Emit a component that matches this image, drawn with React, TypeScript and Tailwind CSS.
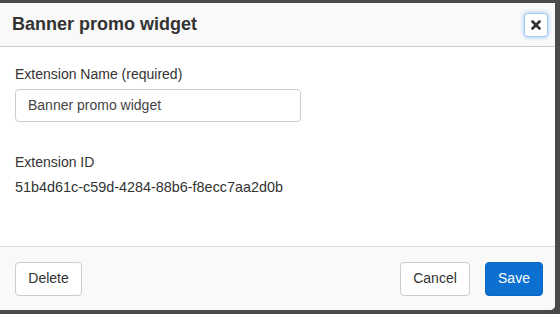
import { X } from "lucide-react";

export default function App() {
  return (
    <div
      className="h-[314px] w-[560px] overflow-hidden bg-[#4a4a4a] pt-[3px]"
      style={{ fontFamily: '"Liberation Sans", Arial, sans-serif' }}
    >
      <div className="flex h-[307px] w-[555px] flex-col overflow-hidden rounded-br-[5px] bg-white text-[#333]">
        <div className="flex h-[44px] items-center justify-between border-b border-[#c9ced6] bg-[#f9f9f9] pl-[12px] pr-[7px]">
          <h4 className="text-[18px] font-bold text-[#333]">Banner promo widget</h4>
          <button className="flex h-[24px] w-[24px] items-center justify-center rounded-[4px] border border-[#a8ccee] bg-white shadow-[0_0_4px_#8fc0ef]">
            <X className="h-[14px] w-[14px] text-[#333]" strokeWidth={4.5} />
          </button>
        </div>
        <div className="flex flex-1 flex-col px-[15px] pt-[17px]">
          <label className="text-[14px] leading-[20px]">Extension Name (required)</label>
          <div className="mt-[5px] flex h-[33px] w-[286px] items-center rounded-[4px] border border-[#ccc] px-[12px] text-[14px] text-[#444]">
            Banner promo widget
          </div>
          <div className="mt-[30px] text-[14px] leading-[20px]">Extension ID</div>
          <div className="mt-[5px] text-[14.4px] leading-[20px]">51b4d61c-c59d-4284-88b6-f8ecc7aa2d0b</div>
        </div>
        <div className="flex h-[64px] items-center justify-between border-t border-[#ddd] bg-[#f9f9f9] pl-[15px] pr-[12px]">
          <button className="h-[34px] w-[67px] rounded-[4px] border border-[#ccc] bg-white text-[14px] text-[#333]">
            Delete
          </button>
          <div className="flex gap-[15px]">
            <button className="h-[34px] w-[70px] rounded-[4px] border border-[#ccc] bg-white text-[14px] text-[#333]">
              Cancel
            </button>
            <button className="h-[34px] w-[58px] rounded-[4px] border border-[#0a67c2] bg-[#0b70cf] text-[14px] text-white">
              Save
            </button>
          </div>
        </div>
      </div>
    </div>
  );
}
